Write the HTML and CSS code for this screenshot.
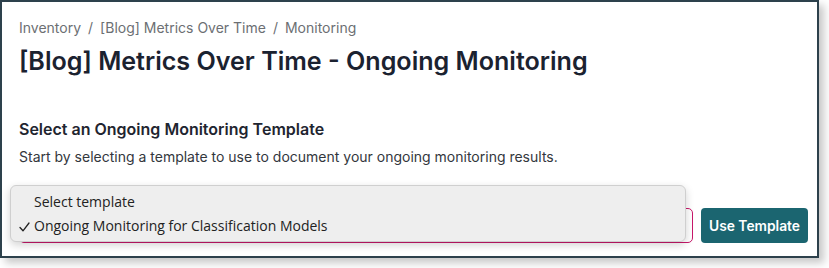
FILE: index.html
```html
<!DOCTYPE html>
<html>
<head>
<meta charset="utf-8">
<link rel="stylesheet" href="styles.css">
</head>
<body>
<div class="frame">
  <nav class="crumbs">
    <span>Inventory</span><span class="sep">/</span><span>[Blog] Metrics Over Time</span><span class="sep">/</span><span>Monitoring</span>
  </nav>
  <h1 class="title">[Blog] Metrics Over Time - Ongoing Monitoring</h1>
  <h2 class="subtitle">Select an Ongoing Monitoring Template</h2>
  <p class="desc">Start by selecting a template to use to document your ongoing monitoring results.</p>
  <div class="row">
    <div class="select-wrap">
      <div class="select"></div>
      <div class="popup">
        <div class="opt">Select template</div>
        <div class="opt checked"><svg class="check" width="11" height="10" viewBox="0 0 11 10"><polyline points="1,5.5 4,8.8 10,1" fill="none" stroke="#222" stroke-width="1.3" stroke-linecap="round" stroke-linejoin="round"/></svg>Ongoing Monitoring for Classification Models</div>
      </div>
    </div>
    <button class="btn">Use Template</button>
  </div>
</div>
</body>
</html>
```

FILE: styles.css
```css
html, body {
  margin: 0;
  padding: 0;
  background: #ffffff;
}
body {
  font-family: Inter, "Noto Sans", sans-serif;
  min-height: 268px;
}
.frame {
  box-sizing: border-box;
  width: 819px;
  height: 258px;
  border: 2px solid #2d414c;
  background: #ffffff;
  box-shadow: 5px 5px 8px rgba(0, 0, 0, 0.22);
  padding: 17px 0 0 17px;
}
.crumbs {
  font-size: 14px;
  line-height: 18px;
  color: #6c6f73;
  display: flex;
}
.sep {
  margin: 0 7px;
}
.title {
  margin: 8px 0 0 0;
  font-size: 25.1px;
  line-height: 32px;
  font-weight: 600;
  color: #1b2230;
}
.subtitle {
  margin: 42px 0 0 0;
  font-size: 16px;
  line-height: 20px;
  font-weight: 600;
  color: #1f2530;
}
.desc {
  margin: 8px 0 0 0;
  font-size: 14px;
  line-height: 20px;
  color: #33373d;
}
.row {
  display: flex;
  align-items: stretch;
  gap: 8px;
  margin-top: 41px;
  height: 35px;
}
.select-wrap {
  position: relative;
  width: 674px;
}
.select {
  box-sizing: border-box;
  height: 35px;
  border: 1px solid #c8176a;
  border-radius: 5px;
  background: #fff;
}
.popup {
  position: absolute;
  left: -9px;
  top: -23px;
  width: 676px;
  height: 57px;
  box-sizing: border-box;
  background: #eeeeee;
  border: 1px solid #cfcfcf;
  border-radius: 6px;
  box-shadow: 0 3px 8px rgba(0, 0, 0, 0.18);
  padding: 4px 0 0 0;
  font-family: "Open Sans", Inter, sans-serif;
  font-size: 14px;
  color: #222;
}
.opt {
  height: 24px;
  line-height: 24px;
  padding-left: 23px;
  position: relative;
}
.check {
  position: absolute;
  left: 8px;
  top: 8px;
}
.btn {
  box-sizing: border-box;
  height: 35px;
  width: 107px;
  padding: 0;
  border: none;
  border-radius: 4px;
  background: #1b6570;
  color: #fff;
  font-family: Inter, sans-serif;
  font-size: 13.8px;
  font-weight: 600;
}
```
